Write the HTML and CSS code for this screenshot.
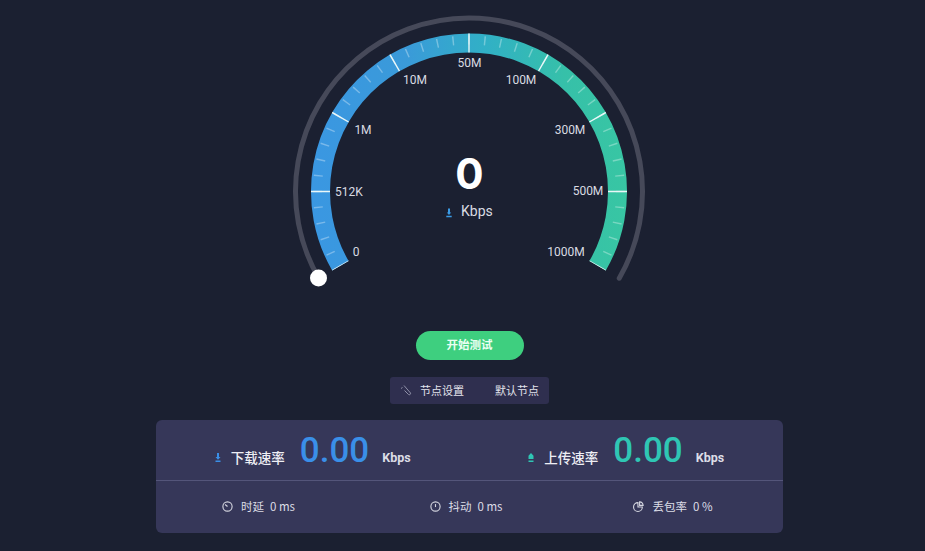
FILE: index.html
```html
<!DOCTYPE html>
<html lang="zh-CN">
<head>
<meta charset="utf-8">
<title>网速测试</title>
<link rel="stylesheet" href="styles.css">
</head>
<body>
<main class="page">
  <svg class="gauge" width="627" height="300" viewBox="156 0 627 300" xmlns="http://www.w3.org/2000/svg">
    <defs>
      <linearGradient id="band" gradientUnits="userSpaceOnUse" x1="311" y1="0" x2="627" y2="0">
        <stop offset="0" stop-color="#3a97e2"/>
        <stop offset="0.3" stop-color="#3a9ad9"/>
        <stop offset="0.55" stop-color="#31b0c6"/>
        <stop offset="0.8" stop-color="#36c0a9"/>
        <stop offset="1" stop-color="#38c6a3"/>
      </linearGradient>
    </defs>
    <path class="track" d="M318.75 278.25A173.5 173.5 0 1 1 619.25 278.25"/>
    <path class="band" d="M340.4 265.75A148.5 148.5 0 1 1 597.6 265.75"/>
    <path class="minor" pathLength="240" d="M337.8 267.25A151.5 151.5 0 1 1 600.2 267.25"/>
    <path class="major" pathLength="240" d="M340.4 265.75A148.5 148.5 0 1 1 597.6 265.75"/>
    <circle class="knob" cx="318.5" cy="278" r="8.5"/>
    <text class="tick-label" x="356" y="255.5">0</text>
    <text class="tick-label" x="349" y="195.5">512K</text>
    <text class="tick-label" x="363" y="133.5">1M</text>
    <text class="tick-label" x="415" y="84">10M</text>
    <text class="tick-label" x="469.5" y="66.500">50M</text>
    <text class="tick-label" x="521" y="84">100M</text>
    <text class="tick-label" x="570" y="133.5">300M</text>
    <text class="tick-label" x="588" y="195">500M</text>
    <text class="tick-label" x="566" y="255.5">1000M</text>
    <text class="speed" x="469.5" y="188.5">0</text>
    <path class="unit-icon" d="M448 208.500h2v4h1.200l-2.200 2.600-2.200-2.600h1.200zM446.300 215.800h5.400v1.400h-5.400z"/>
    <text class="unit" x="461" y="216">Kbps</text>
  </svg>

  <button class="start" type="button">开始测试</button>

  <div class="node-bar">
    <svg class="node-icon" width="12" height="12" viewBox="0 0 12 12" xmlns="http://www.w3.org/2000/svg">
      <path d="M1 4.500l1.500-1M4 1.500l6.500 7.500a1.300 1.300 0 0 1-2 1.500L4.500 6.500"/>
    </svg>
    <span class="node-name">节点设置</span>
    <span class="node-default">默认节点</span>
  </div>

  <section class="panel">
    <div class="rates">
      <div class="rate">
        <svg class="rate-icon" width="6" height="9" viewBox="0 0 6 9" xmlns="http://www.w3.org/2000/svg">
          <path class="fill-blue" d="M2 0h2v4h1.500L3 6.800.5 4H2zM.5 7.500h5V9h-5z"/>
        </svg>
        <span class="rate-label">下载速率</span>
        <span class="rate-value blue">0.00</span>
        <span class="rate-unit">Kbps</span>
      </div>
      <div class="rate">
        <svg class="rate-icon" width="6" height="9" viewBox="0 0 6 9" xmlns="http://www.w3.org/2000/svg">
          <path class="fill-teal" d="M3 0l2.500 2.800V6h-5V2.800zM.5 7.500h5V9h-5z"/>
        </svg>
        <span class="rate-label">上传速率</span>
        <span class="rate-value teal">0.00</span>
        <span class="rate-unit">Kbps</span>
      </div>
    </div>
    <div class="metrics">
      <div class="metric">
        <svg class="metric-icon" width="11" height="11" viewBox="0 0 10 10" xmlns="http://www.w3.org/2000/svg">
          <circle cx="5" cy="5" r="4.200"/><path d="M5 5L2.800 3.200"/>
        </svg>
        <span>时延</span><span>0 ms</span>
      </div>
      <div class="metric">
        <svg class="metric-icon" width="11" height="11" viewBox="0 0 10 10" xmlns="http://www.w3.org/2000/svg">
          <circle cx="5" cy="5" r="4.200"/><path d="M5 2.800V5.500"/>
        </svg>
        <span>抖动</span><span>0 ms</span>
      </div>
      <div class="metric">
        <svg class="metric-icon" width="11" height="11" viewBox="0 0 10 10" xmlns="http://www.w3.org/2000/svg">
          <path d="M4.500 1.500a4 4 0 1 0 4 4h-4zM6 .8a3.500 3.500 0 0 1 3.200 3.200H6z"/>
        </svg>
        <span>丢包率</span><span>0 %</span>
      </div>
    </div>
  </section>
</main>
</body>
</html>
```
FILE: styles.css
```css
* { box-sizing: border-box; }

html, body {
  margin: 0;
  height: 100%;
}

body {
  background: #1b2031;
  color: #e8e9f0;
  font-family: Roboto, "Noto Sans CJK SC", sans-serif;
  overflow: hidden;
}

.page {
  width: 925px;
  height: 551px;
  padding-left: 14px;
  display: flex;
  flex-direction: column;
  align-items: center;
}

.gauge { display: block; flex: none; }

.track {
  fill: none;
  stroke: #464959;
  stroke-width: 5px;
  stroke-linecap: round;
}

.band {
  fill: none;
  stroke: url(#band);
  stroke-width: 19px;
}

.minor {
  fill: none;
  stroke: rgba(255, 255, 255, 0.32);
  stroke-width: 9px;
  stroke-dasharray: 0.55 5.45;
  stroke-dashoffset: 0.275;
}

.major {
  fill: none;
  stroke: #e9f7f8;
  stroke-width: 19px;
  stroke-dasharray: 0.55 29.45;
  stroke-dashoffset: 0.275;
}

.knob { fill: #ffffff; }

.tick-label {
  fill: #d9dbe2;
  font-size: 12px;
  text-anchor: middle;
}

.speed {
  fill: #ffffff;
  font-family: Inter, sans-serif;
  font-size: 42px;
  font-weight: 700;
  text-anchor: middle;
}

.unit {
  fill: #d9dbe2;
  font-size: 14px;
}

.unit-icon { fill: #3a9be6; }

.start {
  width: 108px;
  height: 29px;
  margin-top: 31px;
  flex: none;
  border: 0;
  border-radius: 15px;
  background: #3ecf7f;
  color: #eafff3;
  font-family: "Noto Sans CJK SC", sans-serif;
  font-size: 11.5px;
  font-weight: 700;
  padding: 0 0 3px;
}

.node-bar {
  width: 159px;
  height: 27px;
  margin-top: 17px;
  flex: none;
  display: flex;
  align-items: center;
  padding: 0 10px 2px;
  border-radius: 3px;
  background: #2f2f4f;
  font-family: "Noto Sans CJK SC", sans-serif;
  font-size: 11px;
  color: #e3e4ec;
}

.node-icon {
  fill: none;
  stroke: #8f90a8;
  stroke-width: 1;
  margin-right: 8px;
}

.node-default { margin-left: auto; }

.panel {
  width: 627px;
  height: 113px;
  margin-top: 16px;
  flex: none;
  border-radius: 6px;
  background: #363759;
  display: flex;
  flex-direction: column;
}

.rates {
  height: 61px;
  flex: none;
  display: grid;
  grid-template-columns: 1fr 1fr;
  border-bottom: 1px solid #54557a;
}

.rate {
  display: flex;
  align-items: center;
  justify-content: center;
}

.rate-icon { margin-right: 10px; margin-top: 14px; }

.rate-label {
  font-family: "Noto Sans CJK SC", sans-serif;
  font-size: 13.5px;
  font-weight: 500;
  margin-top: 14px;
  color: #eeeef4;
}

.rate-value {
  font-family: Roboto, sans-serif;
  font-size: 35px;
  font-weight: 500;
  margin: 0 13px 0 15px;
}

.rate-unit {
  font-size: 12.5px;
  font-weight: 700;
  margin-top: 14px;
  color: #dcdde6;
}

.blue { color: #3a8fe8; }
.teal { color: #2fc6b4; }
.fill-blue { fill: #3a8fe8; }
.fill-teal { fill: #2fc6b4; }

.metrics {
  flex: 1;
  display: grid;
  grid-template-columns: 205px 210px 204px;
  padding-bottom: 2px;
}

.metric {
  display: flex;
  align-items: center;
  justify-content: center;
  gap: 6px;
  font-family: "Noto Sans CJK SC", sans-serif;
  font-size: 11.5px;
  color: #dcdde6;
}

.metric-icon {
  fill: none;
  stroke: #d5d6e0;
  stroke-width: 1;
  margin-right: 2px;
}
```
